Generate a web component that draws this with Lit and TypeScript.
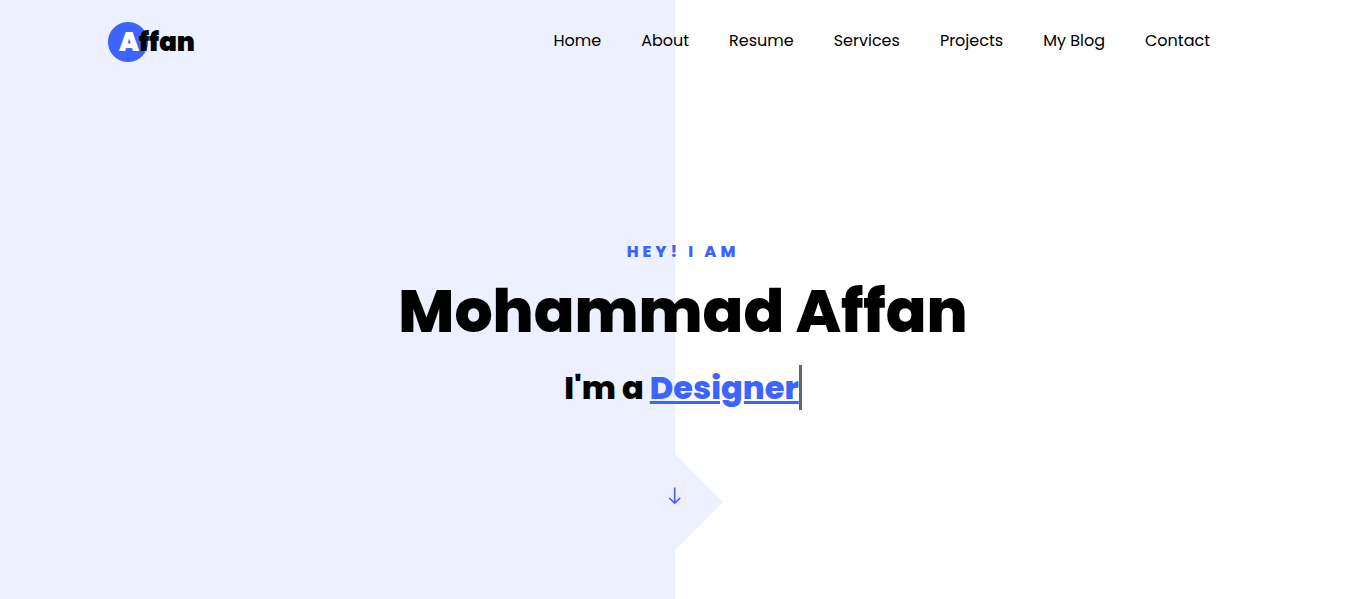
import { LitElement, html, css } from "lit";
import { customElement } from "lit/decorators.js";

const LINKS = ["Home", "About", "Resume", "Services", "Projects", "My Blog", "Contact"];

@customElement("app-root")
export class AppRoot extends LitElement {
  static styles = css`
    :host {
      display: block;
      font-family: Poppins, Inter, sans-serif;
      font-size: 16px;
      color: #000;
      --blue: #3e64ff;
      --tint: #ecf0ff;
    }
    a { color: inherit; text-decoration: none; }
    .page {
      box-sizing: border-box;
      min-height: 100vh;
      display: flex;
      flex-direction: column;
      background: linear-gradient(to right, var(--tint) calc(50% - 8px), #fff calc(50% - 8px));
    }
    .header {
      display: flex;
      justify-content: space-between;
      align-items: flex-start;
      flex-wrap: wrap;
      width: 100%;
      max-width: 1150px;
      box-sizing: border-box;
      margin: 0 auto;
      padding: 22px 48px 20px 0;
    }
    .logo {
      display: flex;
      align-items: center;
      height: 40px;
      padding-left: 11px;
      font-size: 26px;
      font-weight: 900;
      background: radial-gradient(circle at 20px 20px, var(--blue) 19.5px, transparent 20.5px);
    }
    .initial { color: #fff; }
    .links {
      display: flex;
      flex-wrap: wrap;
      gap: 40px;
      list-style: none;
      margin: 0;
      padding: 0;
      font-weight: 400;
      line-height: 38px;
    }
    .hero {
      flex: 1;
      display: flex;
      flex-direction: column;
      align-items: center;
      text-align: center;
      padding-top: 158px;
    }
    .intro {
      font-size: 16px;
      line-height: 24px;
      font-weight: 800;
      letter-spacing: 4px;
      color: var(--blue);
    }
    h1 {
      margin: 11px 0 0;
      font-size: 60px;
      line-height: 72px;
      font-weight: 800;
    }
    h2 {
      display: flex;
      align-items: center;
      gap: 6px;
      margin: 18px 0 0;
      font-size: 32px;
      line-height: 45px;
      font-weight: 800;
    }
    .typed {
      color: var(--blue);
      border-right: 3px solid #666;
      text-decoration: underline;
      text-decoration-thickness: 3px;
    }
    .scroll {
      box-sizing: border-box;
      align-self: flex-start;
      display: flex;
      justify-content: flex-end;
      align-items: center;
      width: calc(50% + 40px);
      height: 96px;
      margin-top: 44px;
      padding: 0 40px 12px 0;
      background: var(--tint);
      clip-path: polygon(calc(100% - 48px) 0, 100% 50%, calc(100% - 48px) 100%, 0 100%, 0 0);
    }
    .scroll svg { display: block; }
  `;

  render() {
    return html`
      <div class="page">
        <header class="header">
          <a class="logo" href="#"><span class="initial">A</span>ffan</a>
          <nav aria-label="Main">
            <ul class="links">
              ${LINKS.map((label) => html`<li><a href="#">${label}</a></li>`)}
            </ul>
          </nav>
        </header>
        <main class="hero">
          <div class="intro">HEY! I AM</div>
          <h1>Mohammad Affan</h1>
          <h2><span>I'm a</span><span class="typed">Designer</span></h2>
          <a class="scroll" href="#" aria-label="Scroll down">
            <svg width="16" height="18" viewBox="0 0 16 18" fill="none" stroke="#4f5bff" stroke-width="1.6">
              <path d="M7.7 0.5V16M2.2 11L7.7 16.2L13.2 11" />
            </svg>
          </a>
        </main>
      </div>
    `;
  }
}
